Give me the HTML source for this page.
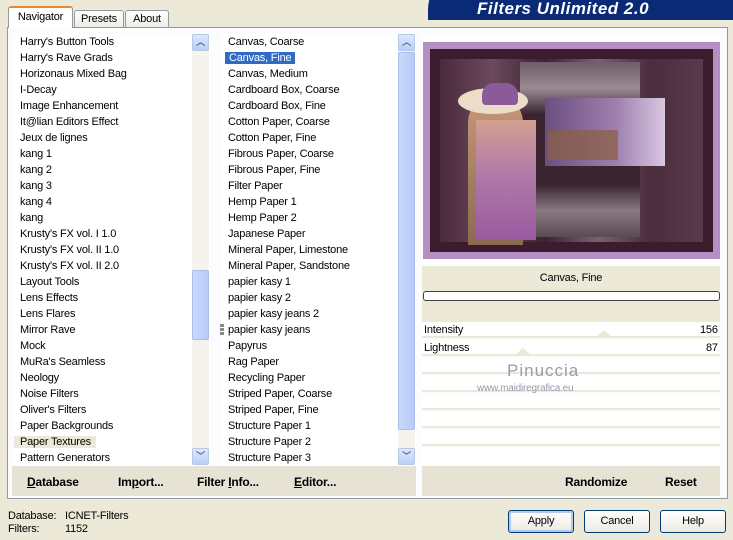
<!DOCTYPE html>
<html><head><style>
*{margin:0;padding:0;box-sizing:border-box}
body{width:733px;height:540px;background:#ece9d8;font-family:"Liberation Sans",sans-serif;font-size:11px;color:#000;position:relative;overflow:hidden;letter-spacing:-0.2px}
.abs{position:absolute}
.tab{position:absolute;top:10px;height:18px;border:1px solid #919b9c;border-bottom:none;background:linear-gradient(#fff,#ecebe5);font-size:11px;text-align:center;line-height:16px;border-radius:3px 3px 0 0}
.list{position:absolute;background:#fff;overflow:hidden}
.list div{height:16px;line-height:16px;padding-left:6px;white-space:nowrap;font-size:11px}
.sb{position:absolute;width:17px;background:#f4f3ee}
.arr{position:absolute;left:0;width:17px;height:17px;border:1px solid #b7c7e8;border-radius:2px;background:linear-gradient(#dde8fd,#b9cff8);color:#4d6185;font-size:9px;text-align:center;line-height:14px;font-weight:bold}
.thumb{position:absolute;left:0;width:17px;border:1px solid #a9bde8;border-radius:2px;background:linear-gradient(90deg,#c9d8fc,#b8ccf8)}
.bb{position:absolute;font-weight:bold;font-size:12px;top:475px}
.btn{position:absolute;top:510px;height:23px;border:1px solid #003c74;border-radius:3px;background:linear-gradient(#fff,#ece9e0);text-align:center;line-height:21px;font-size:11px}
.row{position:absolute;left:422px;width:298px;height:16px;background:#fff;border-bottom:2px solid #ece9d8}
</style></head><body>
<!-- header banner -->
<div class="abs" style="left:428px;top:-30px;width:330px;height:50px;background:#0a2a78;border-radius:40px 0 0 0"></div>
<div class="abs" style="left:477px;top:-1px;color:#fff;font-weight:bold;font-style:italic;font-size:17px;letter-spacing:0.5px">Filters Unlimited 2.0</div>

<!-- tabs -->
<div class="tab" style="left:8px;top:6px;width:65px;height:22px;background:#fff;border-top:2px solid #e68b2c;line-height:19px;z-index:2">Navigator</div>
<div class="tab" style="left:74px;width:50px">Presets</div>
<div class="tab" style="left:125px;width:44px">About</div>
<!-- panel -->
<div class="abs" style="left:7px;top:27px;width:721px;height:472px;border:1px solid #919b9c;background:#fcfcfe"></div>

<!-- left list -->
<div class="list" style="left:14px;top:34px;width:196px;height:432px">
<div>Harry's Button Tools</div><div>Harry's Rave Grads</div><div>Horizonaus Mixed Bag</div><div>I-Decay</div><div>Image Enhancement</div><div>It@lian Editors Effect</div><div>Jeux de lignes</div><div>kang 1</div><div>kang 2</div><div>kang 3</div><div>kang 4</div><div>kang</div><div>Krusty's FX vol. I 1.0</div><div>Krusty's FX vol. II 1.0</div><div>Krusty's FX vol. II 2.0</div><div>Layout Tools</div><div>Lens Effects</div><div>Lens Flares</div><div>Mirror Rave</div><div>Mock</div><div>MuRa's Seamless</div><div>Neology</div><div>Noise Filters</div><div>Oliver's Filters</div><div>Paper Backgrounds</div><div><span style="background:#ece9d8;padding:0 5px 0 6px;margin-left:-6px">Paper Textures</span></div><div>Pattern Generators</div>
</div>
<div class="sb" style="left:192px;top:34px;height:431px">
<div class="arr" style="top:0">︿</div>
<div class="thumb" style="top:236px;height:70px"></div>
<div class="arr" style="top:414px">﹀</div></div>

<!-- middle list -->
<div class="list" style="left:222px;top:34px;width:194px;height:432px">
<div>Canvas, Coarse</div><div><span style="background:#316ac5;color:#fff;padding:0 4px;margin-left:-3px">Canvas, Fine</span></div><div>Canvas, Medium</div><div>Cardboard Box, Coarse</div><div>Cardboard Box, Fine</div><div>Cotton Paper, Coarse</div><div>Cotton Paper, Fine</div><div>Fibrous Paper, Coarse</div><div>Fibrous Paper, Fine</div><div>Filter Paper</div><div>Hemp Paper 1</div><div>Hemp Paper 2</div><div>Japanese Paper</div><div>Mineral Paper, Limestone</div><div>Mineral Paper, Sandstone</div><div>papier kasy 1</div><div>papier kasy 2</div><div>papier kasy jeans 2</div><div>papier kasy jeans</div><div>Papyrus</div><div>Rag Paper</div><div>Recycling Paper</div><div>Striped Paper, Coarse</div><div>Striped Paper, Fine</div><div>Structure Paper 1</div><div>Structure Paper 2</div><div>Structure Paper 3</div>
</div>
<div class="abs" style="left:220px;top:324px;width:4px;height:11px;border-top:3px solid #888;border-bottom:3px solid #888"></div>
<div class="abs" style="left:220px;top:328px;width:4px;height:3px;background:#888"></div>
<div class="sb" style="left:398px;top:34px;height:431px">
<div class="arr" style="top:0">︿</div>
<div class="thumb" style="top:18px;height:378px"></div>
<div class="arr" style="top:414px">﹀</div></div>

<!-- preview -->
<div class="abs" style="left:422px;top:34px;width:298px;height:230px;background:#fff"></div>
<div class="abs" style="left:423px;top:42px;width:297px;height:217px;background:#b58fc4"></div>
<div class="abs" style="left:430px;top:49px;width:283px;height:203px;background:#3a1c2c"></div>
<div class="abs" style="left:440px;top:59px;width:263px;height:183px;background:linear-gradient(90deg,#4b2a3c,#6a4a5c 20%,#3c2232 40%,#7a6070 60%,#4a2c3c 80%,#5a3a4a)"></div>
<div class="abs" style="left:520px;top:62px;width:120px;height:175px;background:linear-gradient(#6d5d66,#9a8a92 15%,#3a2430 30%,#3a2430 70%,#8a7a82 85%,#5a4a52)"></div>
<div class="abs" style="left:545px;top:98px;width:120px;height:68px;background:linear-gradient(90deg,#6c4e80,#a080b0 60%,#d8c8e0)"></div>
<div class="abs" style="left:548px;top:130px;width:70px;height:30px;background:#8a6040;opacity:.7"></div>
<div class="abs" style="left:468px;top:95px;width:55px;height:150px;background:linear-gradient(#c89878,#8a6a50);border-radius:30px 30px 0 0"></div>
<div class="abs" style="left:476px;top:120px;width:60px;height:120px;background:linear-gradient(#d4a090,#b07aa8 45%,#9a5aa0)"></div>
<div class="abs" style="left:458px;top:88px;width:70px;height:26px;background:#eddcc8;border-radius:50%"></div>
<div class="abs" style="left:482px;top:83px;width:36px;height:22px;background:#8a5a9a;border-radius:12px 12px 4px 4px"></div>

<!-- params -->
<div class="abs" style="left:422px;top:266px;width:298px;height:56px;background:#ece9d8"></div>
<div class="abs" style="left:422px;top:272px;width:298px;text-align:center">Canvas, Fine</div>
<div class="abs" style="left:423px;top:291px;width:297px;height:10px;border:1px solid #404040;border-radius:3px;background:#fff"></div>
<div class="row" style="top:322px"></div>
<div class="row" style="top:340px"></div>
<div class="row" style="top:358px"></div>
<div class="row" style="top:376px"></div>
<div class="row" style="top:394px"></div>
<div class="row" style="top:412px"></div>
<div class="row" style="top:430px"></div>
<div class="row" style="top:448px;height:17px;border:none"></div>
<div class="abs" style="left:424px;top:324px">Intensity</div>
<div class="abs" style="left:700px;top:324px">156</div>
<div class="abs" style="left:424px;top:342px">Lightness</div>
<div class="abs" style="left:706px;top:342px">87</div>
<div class="abs" style="left:596px;top:330px;border:8px solid transparent;border-bottom:7px solid #ece9d8;border-top:none"></div>
<div class="abs" style="left:515px;top:348px;border:8px solid transparent;border-bottom:7px solid #ece9d8;border-top:none"></div>
<div class="abs" style="left:507px;top:361px;color:#9a9aaa;font-size:17px;letter-spacing:1px">Pinuccia</div>
<div class="abs" style="left:477px;top:383px;color:#9a9aaa;font-size:10px">www.maidiregrafica.eu</div>

<!-- button bars -->
<div class="abs" style="left:12px;top:466px;width:404px;height:30px;background:#e6e3d4"></div>
<div class="abs" style="left:422px;top:466px;width:298px;height:30px;background:#e6e3d4"></div>
<div class="bb" style="left:27px"><u>D</u>atabase</div>
<div class="bb" style="left:118px">Im<u>p</u>ort...</div>
<div class="bb" style="left:197px">Filter <u>I</u>nfo...</div>
<div class="bb" style="left:294px"><u>E</u>ditor...</div>
<div class="bb" style="left:565px">Randomize</div>
<div class="bb" style="left:665px">Reset</div>

<!-- footer -->
<div class="abs" style="left:8px;top:510px">Database:</div>
<div class="abs" style="left:65px;top:510px">ICNET-Filters</div>
<div class="abs" style="left:8px;top:523px">Filters:</div>
<div class="abs" style="left:65px;top:523px">1152</div>
<div class="btn" style="left:508px;width:66px;box-shadow:inset 0 0 0 2px #b4c8f0">Apply</div>
<div class="btn" style="left:584px;width:66px">Cancel</div>
<div class="btn" style="left:660px;width:66px">Help</div>
</body></html>
